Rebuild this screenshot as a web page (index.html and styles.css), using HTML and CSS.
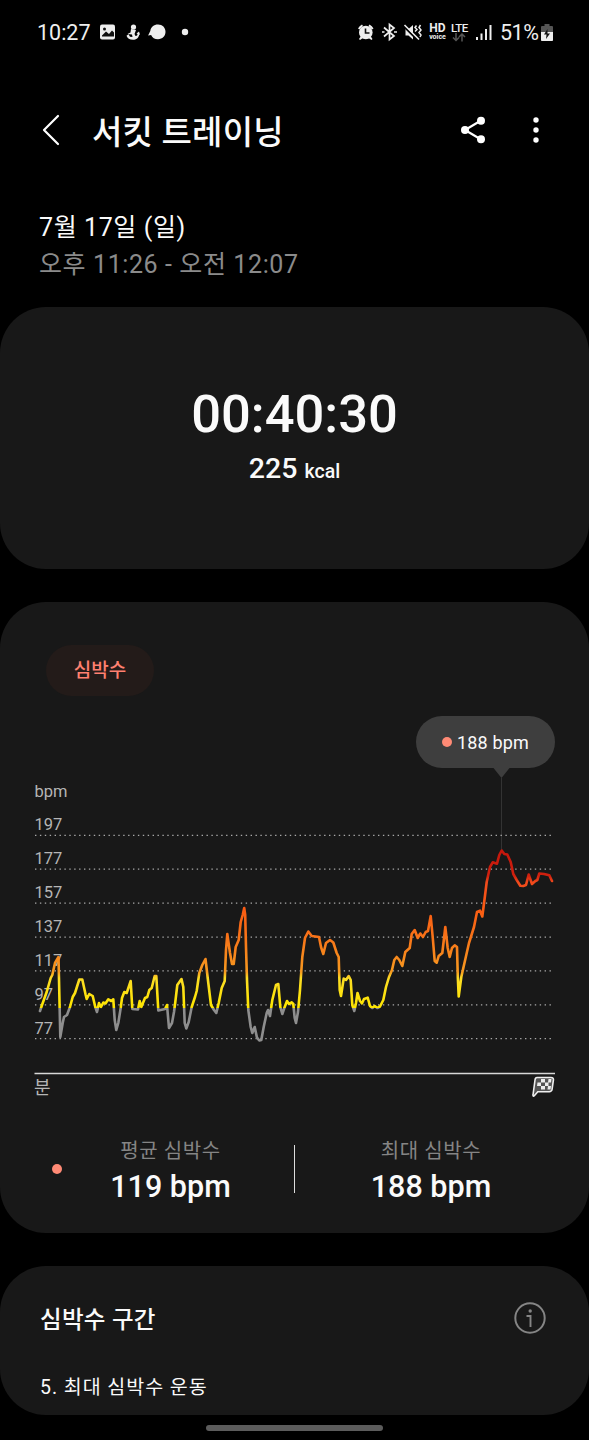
FILE: index.html
```html
<!DOCTYPE html>
<html lang="ko">
<head>
    <meta charset="UTF-8">
    <meta name="viewport" content="width=device-width, initial-scale=1.0">
    <title>서킷 트레이닝</title>
    <link rel="stylesheet" href="styles.css">
</head>
<body>
    <div class="status-bar">
        <span class="clock">10:27</span>
        <svg class="status-left" width="92" height="20" viewBox="98 22 92 20">
            <rect x="100" y="24.500" width="15" height="15" rx="2" fill="#eee"/>
            <path d="M102 35.500l4-4 3 2.500 3-3.500 2 2v4h-12z" fill="#111"/>
            <circle cx="104.500" cy="29" r="1.500" fill="#111"/>
            <g fill="#eee">
                <circle cx="133.500" cy="27" r="2.600"/>
                <path d="M131 29l5 1-1.500 4 1 2c1.500 0 2-1 2-2l-1-.5 2.500-2 1 3-.8.200c-.5 3-3 5-6.200 5-3.500 0-5.500-1.500-6.500-4l2-1.500 1.500 2.500 2.500.3-.5-2.500-4.500-.5 3-1.500z"/>
                <path d="M158 24.500c4.500 0 7.500 3.200 7.500 7.300s-3 7.400-7.500 7.400c-3.300 0-5.800-1.700-6.900-4.300l-3 .5 2.200-4.500c.6-3.800 3.500-6.400 7.700-6.400z"/>
                <circle cx="185" cy="32" r="3.200"/>
            </g>
        </svg>
        <div class="status-right">
            <svg width="68" height="20" viewBox="356 22 68 20">
                <g fill="#eee">
                    <circle cx="365.800" cy="32.500" r="6.800"/>
                    <path d="M358 28.500a9 9 0 0 1 4-4l1 1.500-3.500 3.500zM373.500 28.500a9 9 0 0 0-4-4l-1 1.500 3.500 3.500zM361 36l-2 3 1 1 3-2zM370.500 36l2 3-1 1-3-2z"/>
                    <path d="M405.500 29h3l4.500-4v14.500l-4.500-4h-3z"/>
                </g>
                <path d="M365.500 28.500v4.500h4" fill="none" stroke="#111" stroke-width="1.600"/>
                <path d="M384 27.500l10 8.500-4.500 3.500v-15l4.500 3.500-10 8.500" fill="none" stroke="#eee" stroke-width="1.700"/>
                <path d="M382 32h2.500M394 32h3" stroke="#eee" stroke-width="1.700"/>
                <path d="M404 26.500l13 13" stroke="#000" stroke-width="2"/>
                <path d="M404.500 25l14.500 14.500" stroke="#eee" stroke-width="1.600"/>
                <path d="M416.500 25.500l-1.500 2 2 2-2 2M420.500 25l-1.500 2.500 2 2.500-2 2.500 2 2.500-1 2" fill="none" stroke="#eee" stroke-width="1.500"/>
            </svg>
            <div class="hd"><span>HD</span><small>voice</small></div>
            <div class="lte">LTE
                <svg width="14" height="9" viewBox="0 0 14 9"><path d="M4 0v7M1 4.500L4 7.500 7 4.500M10 8.500V1M7 4l3-3 3 3" fill="none" stroke="#555" stroke-width="1.500"/></svg>
            </div>
            <svg class="signal" width="16" height="16" viewBox="0 0 16 16"><path d="M1 16v-3M5.500 16v-6.500M10 16V5M14.500 16V1" stroke="#eee" stroke-width="2"/></svg>
            <span class="percent">51%</span>
            <svg class="battery" width="12" height="17" viewBox="0 0 12 17">
                <path d="M3.500 0h5v2H11a1 1 0 0 1 1 1v13a1 1 0 0 1-1 1H1a1 1 0 0 1-1-1V3a1 1 0 0 1 1-1h2.500z" fill="#555"/>
                <path d="M0 8h12v8a1 1 0 0 1-1 1H1a1 1 0 0 1-1-1z" fill="#eee"/>
                <path d="M6.500 5L3 10.500h2.500L5 15l4-5.500H6.500z" fill="#111"/>
            </svg>
        </div>
    </div>

    <header>
        <svg class="back" width="20" height="32" viewBox="0 0 20 32"><path d="M17 2L3 16l14 14" fill="none" stroke="#fff" stroke-width="2.200" stroke-linecap="round" stroke-linejoin="round"/></svg>
        <h1>서킷 트레이닝</h1>
        <svg class="share" width="26" height="28" viewBox="0 0 26 28">
            <path d="M21 4.500L5 14l16 9.500" fill="none" stroke="#fff" stroke-width="2.200"/>
            <circle cx="21" cy="4.700" r="4" fill="#fff"/>
            <circle cx="5" cy="14" r="4" fill="#fff"/>
            <circle cx="21" cy="23.300" r="4" fill="#fff"/>
        </svg>
        <svg class="more" width="6" height="28" viewBox="0 0 6 28"><g fill="#fff"><circle cx="3" cy="4" r="2.700"/><circle cx="3" cy="14" r="2.700"/><circle cx="3" cy="24" r="2.700"/></g></svg>
    </header>

    <div class="date">
        <div class="day">7월 17일 (일)</div>
        <div class="time">오후 11:26 - 오전 12:07</div>
    </div>

    <section class="card summary">
        <div class="duration">00:40:30</div>
        <div class="calories">225 <small>kcal</small></div>
    </section>

    <section class="card heart">
        <div class="chip">심박수</div>
        <div class="bubble"><span class="dot"></span>188 bpm</div>
        <svg class="chart" width="589" height="342" viewBox="0 768 589 342">
            <defs>
                <linearGradient id="zones" gradientUnits="userSpaceOnUse" x1="0" y1="850" x2="0" y2="1050">
                    <stop offset="0" stop-color="#c4160c"/>
                    <stop offset="0.130" stop-color="#d0200e"/>
                    <stop offset="0.160" stop-color="#f04a1c"/>
                    <stop offset="0.300" stop-color="#fa5c12"/>
                    <stop offset="0.430" stop-color="#f87218"/>
                    <stop offset="0.610" stop-color="#f79a20"/>
                    <stop offset="0.640" stop-color="#fbdc24"/>
                    <stop offset="0.788" stop-color="#ffe600"/>
                    <stop offset="0.790" stop-color="#8e8e8e"/>
                    <stop offset="1" stop-color="#8e8e8e"/>
                </linearGradient>
            </defs>
            <path d="M493.500 768h16l-8 10z" fill="#3e3e3e"/>
            <path d="M501.500 778v72" stroke="#333" stroke-width="1"/>
            <g class="grid">
                <path d="M35 835.300H553"/>
                <path d="M35 869.200H553"/>
                <path d="M35 903.200H553"/>
                <path d="M35 937.100H553"/>
                <path d="M35 970.900H553"/>
                <path d="M35 1004.800H553"/>
                <path d="M35 1038.700H553"/>
            </g>
            <g class="axis">
                <text x="34.500" y="797">bpm</text>
                <text x="34.500" y="830">197</text>
                <text x="34.500" y="864">177</text>
                <text x="34.500" y="898">157</text>
                <text x="34.500" y="932">137</text>
                <text x="34.500" y="966">117</text>
                <text x="34.500" y="1000">97</text>
                <text x="34.500" y="1034">77</text>
                <text class="unit" x="34" y="1094">분</text>
            </g>
            <polyline class="line" points="40,1011 42,1005 46.700,992 50.700,978 52.300,975 55,963 58.500,957 59.700,1010 60.300,1037 62.700,1023 64,1017 67,1015 70,1007 72.700,997 75,993 79.300,979.500 82.300,979.500 85.700,995 86.700,999 89.300,994 92.700,996 95.300,1007 97,1012 99,1003 101,1007 103.300,1002.500 105.500,1003.500 108.300,999.300 111.300,1001 113.300,999.300 114.700,1020 116.300,1030 118.300,1023 120.700,1008 122,998 124.300,992 126.700,993 130.700,981 132.300,1009 138,1009.500 139.700,1001 141.300,1007 145,998 147.300,997 149.300,990 151.700,988 154.700,976 156.300,976 158.300,1010.500 165,1009 167,1005 169,1028 172,1023 174,1012 175.300,1002 177.300,985 181.500,979 183.300,987 184.700,1023 186.300,1028.500 188.700,1022 191.700,1007 195,997 196.700,991 199.300,973 202.300,965 205.500,959 208.300,983 211,1005 214,1010 216.300,1013 218.700,1003 221.700,988 224.700,981 226,950 227.300,934 230,953 232,964 233.700,964 235.700,947 238.700,940 240.700,922 242.700,915 244.200,908 245.200,915 246,947 247,980 248.300,1010 250.700,1027 252.300,1033 254.700,1027 257,1037.700 259.300,1040.500 261.300,1040 263.700,1027 266.700,1013 268,1010 270,1016 272.300,1000 276,985 278.300,984 280.300,1007 282.300,1014 284.300,1008 287,1001 289,1004 291.700,1002.300 293.300,1004 294.700,1018 296,1023 298,1012 300,990 302.300,957 305,938 308.300,931.500 311.700,936 319,937 321,947 323.300,954 326,943 330,940 333.300,942.500 336.700,953 338.700,957 339.700,990 341,996 343.700,978.500 346,980 348.700,976 350.700,980 352.300,1005 354.300,1011 356,1003 357.500,993 360,1001 362,1003.300 364,999 367.700,997.700 370,1006 372.300,1008 374.700,1006 377.300,1008 380,1006.500 383.300,1000 386,987 389,977 392,970 394.300,960 396.700,957 399.300,960 402.300,966 405.300,952 409.700,948 411.700,934 414.700,930 417.700,938 420.300,933.500 423,937 425.700,932 428,931 430.700,916 432.700,937 434.700,961 436.700,962.700 438.700,956 442.300,953 445.300,927 447.700,948 449.700,957 452,948 454.700,945.300 457,947 457.800,977 458.700,996.500 461.300,977 464,965 469,943 474,927 477,912 480,910.700 482.300,916.500 484.700,898 486.700,882 490,867 492.700,862.300 497,863.700 499.300,855 501.700,850.500 504.300,854 507.300,854.500 510.700,862 513.300,874 516.700,880 520.300,885.700 523.300,886 526,885 528.700,874.500 532,884 535.300,881 537.300,880 539.300,873.500 544,874 549.300,875.300 552,881"/>
            <path d="M34.500 1073.500H555" stroke="#d8d8d8" stroke-width="1.700"/>
            <!-- finish flag -->
            <path d="M537 1077.500h14c2 0 2.700 1 2.400 2.700l-1.300 9c-.3 1.700-1.300 2.500-2.800 2.500h-11.500l-3.500 4c-.8.800-1.500.4-1.300-.7l2-15c.2-1.600.8-2.500 2-2.500z" fill="#555" stroke="#eee" stroke-width="1.600"/>
            <path d="M541 1079h4v3.500h-4zM548.500 1079h3l-.5 3.500h-3zM537.500 1082.500h3.500v3.500h-4zM545 1082.500h3.500v3.500H545zM541 1086h4v3.500h-4zM548 1086h3l-.5 3.500h-3z" fill="#eee"/>
        </svg>
        <div class="stats">
            <span class="dot"></span>
            <div class="stat average">
                <div class="label">평균 심박수</div>
                <div class="value">119 bpm</div>
            </div>
            <div class="divider"></div>
            <div class="stat">
                <div class="label">최대 심박수</div>
                <div class="value">188 bpm</div>
            </div>
        </div>
    </section>

    <section class="card zone-card">
        <div class="zone-head">
            <h2>심박수 구간</h2>
            <svg width="32" height="32" viewBox="0 0 32 32">
                <circle cx="16" cy="16" r="14.700" fill="none" stroke="#858585" stroke-width="2"/>
                <path d="M12.500 14h4v11" fill="none" stroke="#858585" stroke-width="1.900"/>
                <circle cx="16.200" cy="9" r="1.700" fill="#858585"/>
            </svg>
        </div>
        <div class="zone">5. 최대 심박수 운동</div>
    </section>

    <div class="home-bar"></div>
</body>
</html>
```
FILE: styles.css
```css
body {
    font-family: Roboto, 'Noto Sans CJK KR', sans-serif;
    margin: 0;
    background-color: #000;
    color: #fafafa;
    height: 1440px;
    overflow: hidden;
}

svg {
    display: block;
    flex-shrink: 0;
}

.status-bar {
    display: flex;
    align-items: center;
    height: 64px;
    padding: 0 36px 0 37px;
    color: #eee;
}

.clock {
    width: 61px;
    font-size: 21.500px;
}

.status-right {
    display: flex;
    align-items: center;
    margin-left: auto;
}

.hd {
    width: 19px;
    margin-left: 4px;
    font-size: 12px;
    font-weight: bold;
    text-align: center;
}

.hd span,
.hd small {
    display: block;
    line-height: 11px;
}

.hd small {
    font-size: 7px;
    line-height: 7px;
}

.lte {
    width: 19px;
    margin: 0 6px 0 4px;
    font-size: 11.500px;
    font-weight: 500;
    line-height: 10px;
    letter-spacing: -0.500px;
}

.lte svg {
    margin-left: 1px;
}

.percent {
    width: 41px;
    margin-left: 8px;
    font-size: 21.500px;
    letter-spacing: -0.500px;
}

.battery {
    margin-left: 0;
}

header {
    display: flex;
    align-items: center;
    height: 132px;
    padding: 0 50px 0 41px;
}

h1 {
    margin: 0 auto 0 31px;
    font-size: 33px;
    font-weight: 500;
    letter-spacing: 0.200px;
}

.more {
    margin-left: 47px;
}

.date {
    height: 97px;
    padding: 13px 39px 0;
    box-sizing: border-box;
    font-size: 25px;
    line-height: 37px;
    letter-spacing: 0.600px;
}

.time {
    color: #8b8b8b;
}

.card {
    background-color: #181818;
    border-radius: 46px;
    box-sizing: border-box;
}

.summary {
    height: 262px;
    margin: 14px 0 33px;
    padding-top: 75px;
    text-align: center;
}

.duration {
    font-size: 52.500px;
    font-weight: 500;
    line-height: 64px;
}

.calories {
    font-size: 28.500px;
    font-weight: 500;
    line-height: 46px;
}

.calories small {
    font-size: 19.500px;
}

.heart {
    display: flex;
    flex-direction: column;
    height: 631px;
    padding-top: 43px;
}

.chip {
    width: 108px;
    height: 51px;
    margin-left: 46px;
    border-radius: 26px;
    background-color: #231b19;
    color: #ff8070;
    font-size: 19px;
    font-weight: 500;
    line-height: 52px;
    text-align: center;
}

.bubble {
    display: flex;
    align-items: center;
    justify-content: center;
    align-self: flex-end;
    width: 139px;
    height: 52px;
    margin: 20px 34px 0 0;
    border-radius: 26px;
    background-color: #3e3e3e;
    font-size: 18px;
    letter-spacing: 0.150px;
}

.dot {
    width: 10px;
    height: 10px;
    margin-right: 5px;
    border-radius: 50%;
    background-color: #ff8a75;
}

.grid {
    fill: none;
    stroke: #a8a8a8;
    stroke-width: 1.300;
    stroke-dasharray: 1.400 3.500;
}

.axis {
    fill: #b5b5b5;
    font-size: 16.500px;
}

.unit {
    font-size: 18px;
}

.line {
    fill: none;
    stroke: url(#zones);
    stroke-width: 2.600;
    stroke-linejoin: round;
    stroke-linecap: round;
}

.stats {
    display: flex;
    align-items: center;
    height: 64px;
    margin-top: 27px;
    padding: 0 22px 0 52px;
}

.stats .dot {
    margin-right: -15px;
}

.stat {
    flex: 1;
    padding-top: 5px;
    text-align: center;
}

.average {
    flex: none;
    width: 247px;
}

.label {
    color: #858585;
    font-size: 20px;
    line-height: 30px;
    letter-spacing: 0.600px;
}

.value {
    font-size: 30.500px;
    font-weight: 500;
    line-height: 41px;
}

.divider {
    width: 1px;
    height: 48px;
    background-color: #ddd;
}

.zone-card {
    height: 149px;
    margin-top: 33px;
    padding: 35px 43px 0 40px;
}

.zone-head {
    display: flex;
    align-items: center;
    justify-content: space-between;
    height: 34px;
}

h2 {
    margin: 0;
    font-size: 23.500px;
    font-weight: 500;
    letter-spacing: 0.300px;
}

.zone {
    margin-top: 38px;
    font-size: 19.500px;
    line-height: 30px;
    letter-spacing: 0.950px;
}

.home-bar {
    width: 177px;
    height: 6px;
    margin: 10px auto 0;
    border-radius: 3px;
    background-color: #5c5c5c;
}
```
